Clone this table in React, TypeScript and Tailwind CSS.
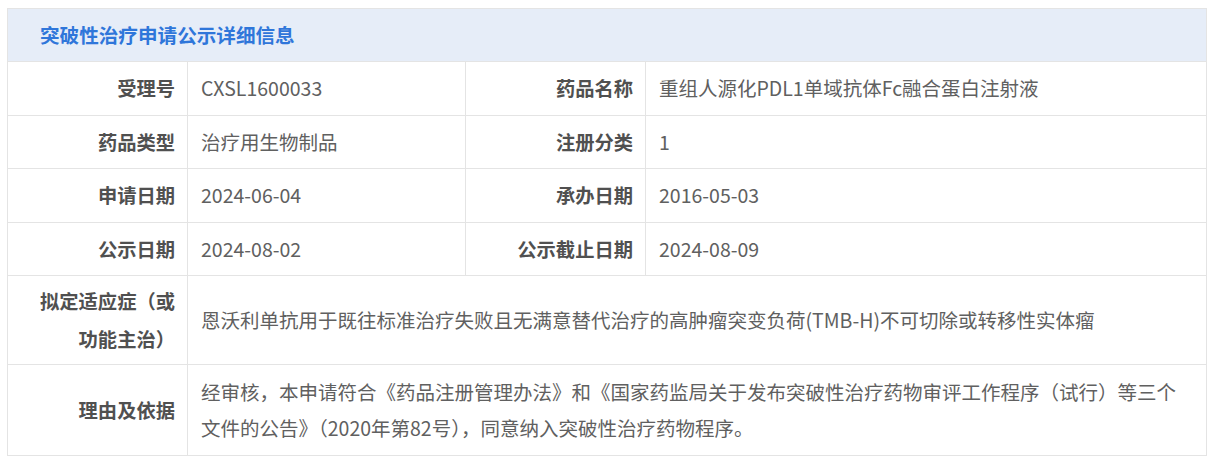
const labelCls =
  "border border-[#e4e4e4] text-right font-bold text-[#505050] text-[19.3px] leading-[38.5px] pl-[24px] pr-[12px] py-[5.5px] align-middle";
const valueCls =
  "border border-[#e4e4e4] text-left text-[#606060] text-[19.5px] leading-[36px] pl-[13px] pr-[20px] align-middle";

const rows: [string, string, string, string][] = [
  ["受理号", "CXSL1600033", "药品名称", "重组人源化PDL1单域抗体Fc融合蛋白注射液"],
  ["药品类型", "治疗用生物制品", "注册分类", "1"],
  ["申请日期", "2024-06-04", "承办日期", "2016-05-03"],
  ["公示日期", "2024-08-02", "公示截止日期", "2024-08-09"],
];

export default function App() {
  return (
    <div
      className="bg-white min-h-[472px] pl-[7px] pt-[8px]"
      style={{ fontFamily: '"Noto Sans CJK SC", "Noto Sans", sans-serif' }}
    >
      <table className="table-fixed border-collapse w-[1200px]">
        <colgroup>
          <col className="w-[180px]" />
          <col className="w-[278px]" />
          <col className="w-[180px]" />
          <col />
        </colgroup>
        <thead>
          <tr>
            <th
              colSpan={4}
              className="border border-[#e4e4e4] bg-[#e6edf8] text-left text-[#2f76da] font-bold text-[19.6px] leading-[36px] pl-[32px] py-[8px]"
            >
              突破性治疗申请公示详细信息
            </th>
          </tr>
        </thead>
        <tbody>
          {rows.map((r) => (
            <tr key={r[0]}>
              <td className={labelCls}>{r[0]}</td>
              <td className={valueCls + " py-[8.3px]"}>{r[1]}</td>
              <td className={labelCls}>{r[2]}</td>
              <td className={valueCls + " py-[8.3px]"}>{r[3]}</td>
            </tr>
          ))}
          <tr>
            <td className={labelCls}>拟定适应症（或功能主治）</td>
            <td colSpan={3} className={valueCls + " py-[8.3px]"}>
              恩沃利单抗用于既往标准治疗失败且无满意替代治疗的高肿瘤突变负荷(TMB-H)不可切除或转移性实体瘤
            </td>
          </tr>
          <tr>
            <td className={labelCls}>理由及依据</td>
            <td colSpan={3} className={valueCls + " py-[9px]"}>
              经审核，本申请符合《药品注册管理办法》和《国家药监局关于发布突破性治疗药物审评工作程序（试行）等三个文件的公告》（2020年第82号），同意纳入突破性治疗药物程序。
            </td>
          </tr>
        </tbody>
      </table>
    </div>
  );
}
